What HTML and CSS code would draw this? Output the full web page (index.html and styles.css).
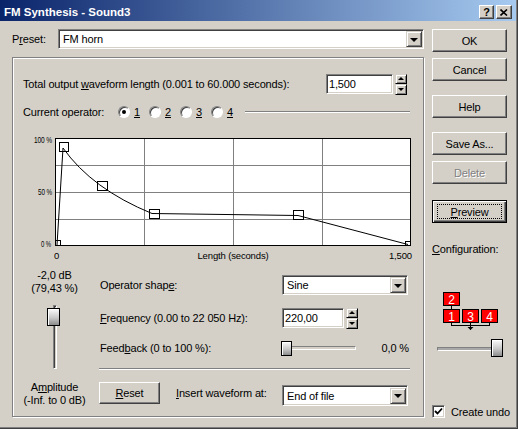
FILE: index.html
```html
<!DOCTYPE html>
<html>
<head>
<meta charset="utf-8">
<title>FM Synthesis - Sound3</title>
<link rel="stylesheet" href="styles.css">
</head>
<body>
<div class="window">
  <div class="titlebar">
    <span class="title">FM Synthesis - Sound3</span>
    <div class="tbtns">
      <span class="tbtn help-btn">?</span>
      <span class="tbtn close-btn"><svg width="8" height="7" viewBox="0 0 8 7"><path d="M0.5 0.5 L7 6.5 M7 0.5 L0.5 6.5" stroke="#000" stroke-width="1.6" fill="none"/></svg></span>
    </div>
  </div>
  <div class="client">
    <div class="left">
      <div class="preset-row">
        <span class="preset-lbl">P<u>r</u>eset:</span>
        <div class="field combo preset-combo"><span class="combo-text">FM horn</span><span class="drop"></span></div>
      </div>
      <div class="group">
        <div class="row-total">
          <span class="grow">Total output <u>w</u>aveform length (0.001 to 60.000 seconds):</span>
          <div class="field num total-num">1,500</div>
          <div class="spin"><span class="up"></span><span class="down"></span></div>
        </div>
        <div class="row-op">
          <span class="op-lbl">Current operator:</span>
          <span class="radio-item"><span class="radio on"></span><u>1</u></span>
          <span class="radio-item"><span class="radio"></span><u>2</u></span>
          <span class="radio-item"><span class="radio"></span><u>3</u></span>
          <span class="radio-item"><span class="radio"></span><u>4</u></span>
          <span class="etch op-line"></span>
        </div>
        <svg class="graph" width="410" height="134" viewBox="13 130 410 134">
          <rect x="55.5" y="138.5" width="355" height="107" fill="#fff" stroke="none"/>
          <g stroke="#808080" stroke-width="1">
            <line x1="144.5" y1="139" x2="144.5" y2="246"/>
            <line x1="233.5" y1="139" x2="233.5" y2="246"/>
            <line x1="322.5" y1="139" x2="322.5" y2="246"/>
            <line x1="56" y1="165.5" x2="411" y2="165.5"/>
            <line x1="56" y1="192.5" x2="411" y2="192.5"/>
            <line x1="56" y1="219.5" x2="411" y2="219.5"/>
          </g>
          <rect x="55.5" y="138.5" width="355" height="107" fill="none" stroke="#000"/>
          <path d="M57 245 L63 148 Q92 189 152 213.5 L226 214.5 L298 215.5 L408 244.5" fill="none" stroke="#000" stroke-width="1"/>
          <g fill="none" stroke="#000" stroke-width="1">
            <rect x="55.5" y="240.5" width="5" height="5"/>
            <rect x="59.5" y="142.5" width="9" height="9"/>
            <rect x="97.5" y="181.5" width="10" height="9"/>
            <rect x="149.5" y="209.5" width="10" height="9"/>
            <rect x="293.5" y="210.5" width="10" height="9"/>
            <rect x="405.5" y="241.5" width="5" height="4"/>
          </g>
          <g class="gtext">
            <text x="52" y="143" text-anchor="end" textLength="18" lengthAdjust="spacingAndGlyphs" class="ylab">100 %</text>
            <text x="52" y="195" text-anchor="end" textLength="14" lengthAdjust="spacingAndGlyphs" class="ylab">50 %</text>
            <text x="51" y="247" text-anchor="end" textLength="10" lengthAdjust="spacingAndGlyphs" class="ylab">0 %</text>
            <text x="54" y="259">0</text>
            <text x="233" y="259" text-anchor="middle">Length (seconds)</text>
            <text x="412" y="259" text-anchor="end">1,500</text>
          </g>
        </svg>
        <div class="bottom">
          <div class="amp-col">
            <div class="amp-val">-2,0 dB<br>(79,43 %)</div>
            <div class="vslider"><span class="vtrack"></span><span class="thumb vthumb"></span></div>
            <div class="amp-lbl">A<u>m</u>plitude<br>(-Inf. to 0 dB)</div>
          </div>
          <div class="ctl-col">
            <div class="crow shape-row">
              <span class="clbl">Operator shap<u>e</u>:</span>
              <div class="field combo small-combo"><span class="combo-text">Sine</span><span class="drop"></span></div>
            </div>
            <div class="crow freq-row">
              <span class="clbl"><u>F</u>requency (0.00 to 22 050 Hz):</span>
              <div class="field num freq-num">220,00</div>
              <div class="spin"><span class="up"></span><span class="down"></span></div>
            </div>
            <div class="crow fb-row">
              <span class="clbl">Feed<u>b</u>ack (0 to 100 %):</span>
              <div class="hslider"><span class="htrack"></span><span class="thumb hthumb"></span></div>
              <span class="fb-val">0,0 %</span>
            </div>
            <div class="etch sep"></div>
            <div class="crow reset-row">
              <span class="btn reset-btn"><u>R</u>eset</span>
              <span class="ins-lbl"><u>I</u>nsert waveform at:</span>
              <div class="field combo small-combo ins-combo"><span class="combo-text">End of file</span><span class="drop"></span></div>
            </div>
          </div>
        </div>
      </div>
    </div>
    <div class="right">
      <span class="btn">OK</span>
      <span class="btn b-cancel">Cancel</span>
      <span class="btn b-help">Help</span>
      <span class="btn b-save">Save As...</span>
      <span class="btn b-delete disabled">Delete</span>
      <span class="btn b-preview default"><span class="focus"></span><u>P</u>review</span>
      <div class="config-lbl"><u>C</u>onfiguration:</div>
      <svg class="config" width="76" height="50" viewBox="432 288 76 50">
        <g stroke="#000" stroke-width="1" fill="none">
          <line x1="451.5" y1="305" x2="451.5" y2="309"/>
          <line x1="451.5" y1="322" x2="451.5" y2="326"/>
          <line x1="470.5" y1="322" x2="470.5" y2="330"/>
          <line x1="489.5" y1="322" x2="489.5" y2="326"/>
          <line x1="451" y1="325.5" x2="490" y2="325.5"/>
        </g>
        <path d="M467.5 327 L473.5 327 L470.5 330 Z" fill="#000"/>
        <g fill="#ff0000" stroke="#000" stroke-width="1">
          <rect x="443.5" y="292.5" width="16" height="13"/>
          <rect x="443.5" y="309.5" width="16" height="13"/>
          <rect x="462.5" y="309.5" width="16" height="13"/>
          <rect x="481.5" y="309.5" width="16" height="13"/>
        </g>
        <g class="ctext" fill="#fff" text-anchor="middle">
          <text x="451.5" y="304">2</text>
          <text x="451.5" y="321">1</text>
          <text x="470.5" y="321">3</text>
          <text x="489.5" y="321">4</text>
        </g>
      </svg>
      <div class="cslider"><span class="ctrack"></span><span class="thumb cthumb"></span></div>
      <div class="undo-row"><span class="check"><svg width="9" height="9" viewBox="0 0 9 9"><path d="M1 4 L3.5 6.5 L8 1.5" stroke="#000" stroke-width="1.8" fill="none"/></svg></span><span class="undo-text">Create undo</span></div>
    </div>
  </div>
</div>
</body>
</html>
```
FILE: styles.css
```css
body {
  margin: 0;
  background: #d4d0c8;
  font-family: "Liberation Sans", Arial, sans-serif;
  font-size: 11px;
  letter-spacing: -0.15px;
  color: #000;
}
.window {
  width: 518px;
  height: 429px;
  box-sizing: border-box;
  background: #d4d0c8;
  border-right: 1px solid #404040;
  border-bottom: 1px solid #404040;
  box-shadow: inset -1px -1px 0 #808080;
  overflow: hidden;
}
.titlebar {
  height: 21px;
  margin-right: 1px;
  display: flex;
  align-items: flex-start;
  background: linear-gradient(to right, #0a246a, #a6caf0);
  color: #fff;
}
.title {
  font-weight: bold;
  font-size: 11.5px;
  letter-spacing: 0;
  padding-left: 4px;
  line-height: 14px;
  margin-top: 5px;
}
.tbtns {
  margin-left: auto;
  margin-right: 4px;
  margin-top: 5px;
  display: flex;
  gap: 2px;
}
.tbtn {
  box-sizing: border-box;
  width: 16px;
  height: 14px;
  background: #d4d0c8;
  border: 1px solid;
  border-color: #fff #404040 #404040 #fff;
  box-shadow: inset -1px -1px 0 #808080;
  color: #000;
  display: flex;
  align-items: center;
  justify-content: center;
  font-weight: bold;
  font-size: 11px;
  line-height: 11px;
}
.help-btn { width: 15px; }
.client {
  display: flex;
  padding: 8px 0 0 12px;
}
.left { width: 412px; }
.preset-row {
  display: flex;
  align-items: center;
  height: 20px;
}
.preset-lbl { width: 46px; }
.field {
  box-sizing: border-box;
  height: 20px;
  background: #fff;
  border: 1px solid;
  border-color: #808080 #fff #fff #808080;
  box-shadow: inset 1px 1px 0 #404040, inset -1px -1px 0 #d4d0c8;
  display: flex;
  align-items: center;
}
.combo { padding-left: 4px; }
.preset-combo { width: 366px; }
.drop {
  box-sizing: border-box;
  margin-left: auto;
  margin-right: 1px;
  width: 16px;
  height: 16px;
  background: #d4d0c8;
  border: 1px solid;
  border-color: #d4d0c8 #404040 #404040 #d4d0c8;
  box-shadow: inset 1px 1px 0 #fff, inset -1px -1px 0 #808080;
  display: flex;
  align-items: center;
  justify-content: center;
}
.drop::after {
  content: "";
  border-left: 4px solid transparent;
  border-right: 4px solid transparent;
  border-top: 4px solid #000;
  margin-top: 1px;
}
.group {
  box-sizing: border-box;
  margin-top: 8px;
  width: 412px;
  height: 360px;
  border: 1px solid #808080;
  box-shadow: 1px 1px 0 #fff, inset 1px 1px 0 #fff;
  padding-top: 16px;
  display: flex;
  flex-direction: column;
}
.row-total {
  display: flex;
  align-items: center;
  height: 20px;
  padding-left: 10px;
  padding-right: 16px;
}
.grow { flex: 1; }
.num { padding-left: 2px; }
.total-num { width: 67px; }
.spin {
  margin-left: 2px;
  width: 12px;
  height: 21px;
  display: flex;
  flex-direction: column;
}
.spin span {
  flex: 1;
  box-sizing: border-box;
  background: #d4d0c8;
  border: 1px solid;
  border-color: #d4d0c8 #000 #000 #d4d0c8;
  box-shadow: inset 1px 1px 0 #fff, inset -1px -1px 0 #808080;
  display: flex;
  align-items: center;
  justify-content: center;
}
.spin .up::after {
  content: "";
  border-left: 3px solid transparent;
  border-right: 3px solid transparent;
  border-bottom: 3px solid #000;
}
.spin .down::after {
  content: "";
  border-left: 3px solid transparent;
  border-right: 3px solid transparent;
  border-top: 3px solid #000;
}
.row-op {
  display: flex;
  align-items: center;
  height: 18px;
  margin-top: 9px;
  padding-left: 10px;
}
.op-lbl { width: 95px; }
.radio-item {
  width: 31px;
  display: flex;
  align-items: center;
  gap: 4px;
}
.radio {
  box-sizing: border-box;
  width: 12px;
  height: 12px;
  border-radius: 50%;
  background: #fff;
  border: 1px solid;
  border-color: #808080 #fff #fff #808080;
  box-shadow: inset 1px 1px 0 #404040;
  display: flex;
  align-items: center;
  justify-content: center;
}
.radio.on::after {
  content: "";
  width: 4px;
  height: 4px;
  border-radius: 50%;
  background: #000;
}
.etch {
  box-sizing: border-box;
  height: 2px;
  border-top: 1px solid #808080;
  border-bottom: 1px solid #fff;
}
.op-line {
  margin-left: 3px;
  width: 165px;
}
.graph {
  display: block;
  margin-top: 9px;
}
.gtext {
  font-family: "Liberation Sans", Arial, sans-serif;
  font-size: 9.5px;
  fill: #000;
}
.ylab { font-size: 9px; }
.bottom { display: flex; }
.amp-col {
  width: 83px;
  padding-top: 5px;
  display: flex;
  flex-direction: column;
  align-items: center;
  text-align: center;
}
.amp-val, .amp-lbl { line-height: 13px; }
.vslider {
  margin-top: 10px;
  width: 13px;
  height: 64px;
  position: relative;
  display: flex;
  justify-content: center;
}
.vtrack {
  box-sizing: border-box;
  width: 4px;
  height: 64px;
  border: 1px solid;
  border-color: #808080 #fff #fff #808080;
  box-shadow: inset 1px 1px 0 #404040;
  background: #d4d0c8;
  margin-left: 1px;
}
.thumb {
  position: absolute;
  box-sizing: border-box;
  border: 1px solid #000;
  background: linear-gradient(to bottom, #fafafa, #c8c8c8 55%, #8c8c8c);
  box-shadow: inset 1px 1px 0 #fff;
}
.vthumb {
  left: -1px;
  top: 3px;
  width: 13px;
  height: 18px;
}
.amp-lbl { margin-top: 12px; }
.ctl-col {
  margin-left: 3px;
  width: 311px;
  padding-top: 10px;
  display: flex;
  flex-direction: column;
}
.crow {
  display: flex;
  align-items: center;
  height: 22px;
}
.clbl { width: 182px; padding-left: 1px; }
.small-combo { width: 126px; }
.freq-row { margin-top: 11px; }
.freq-num { width: 62px; }
.fb-row { margin-top: 8px; }
.hslider {
  position: relative;
  width: 74px;
  height: 16px;
}
.htrack {
  position: absolute;
  left: 0;
  right: 0;
  top: 6px;
  height: 4px;
  box-sizing: border-box;
  border: 1px solid;
  border-color: #808080 #fff #fff #808080;
  background: #d4d0c8;
}
.hthumb {
  left: -1px;
  top: 1px;
  width: 11px;
  height: 15px;
}
.fb-val { margin-left: auto; padding-right: 1px; }
.sep { margin-top: 9px; width: 311px; }
.reset-row {
  margin-top: 12px;
  height: 24px;
  align-items: flex-start;
}
.btn {
  position: relative;
  box-sizing: border-box;
  width: 75px;
  height: 23px;
  display: flex;
  align-items: center;
  justify-content: center;
  background: #d4d0c8;
  border: 1px solid;
  border-color: #fff #404040 #404040 #fff;
  box-shadow: inset -1px -1px 0 #808080;
}
.reset-btn { width: 61px; height: 22px; }
.ins-lbl { width: 106px; margin-left: 16px; line-height: 22px; }
.ins-combo { margin-top: 3px; height: 21px; }
.right {
  margin-left: 8px;
  width: 75px;
  display: flex;
  flex-direction: column;
}
.b-cancel { margin-top: 6px; }
.b-help { margin-top: 14px; }
.b-save { margin-top: 14px; }
.b-delete { margin-top: 6px; }
.b-preview { margin-top: 16px; }
.disabled { color: #808080; text-shadow: 1px 1px 0 #fff; }
.default {
  border: 1px solid #000;
  box-shadow: inset 1px 1px 0 #fff, inset -1px -1px 0 #404040, inset -2px -2px 0 #808080;
}
.focus {
  position: absolute;
  left: 4px;
  right: 4px;
  top: 3px;
  bottom: 3px;
  border: 1px dotted #000;
}
.config-lbl {
  margin-top: 19px;
  line-height: 14px;
}
.config {
  display: block;
  margin-top: 32px;
}
.ctext {
  font-family: "Liberation Sans", Arial, sans-serif;
  font-size: 12px;
}
.cslider {
  position: relative;
  margin-top: 1px;
  height: 18px;
  width: 75px;
}
.ctrack {
  position: absolute;
  left: 5px;
  width: 66px;
  top: 8px;
  height: 4px;
  box-sizing: border-box;
  border: 1px solid;
  border-color: #808080 #d4d0c8 #fff #808080;
  background: #a8a8a8;
}
.cthumb {
  left: 59px;
  top: 0;
  width: 12px;
  height: 18px;
}
.undo-row {
  margin-top: 48px;
  display: flex;
  align-items: center;
  gap: 6px;
  height: 13px;
  white-space: nowrap;
}
.check {
  flex: none;
  box-sizing: border-box;
  width: 13px;
  height: 13px;
  background: #fff;
  border: 1px solid;
  border-color: #808080 #fff #fff #808080;
  box-shadow: inset 1px 1px 0 #404040, inset -1px -1px 0 #d4d0c8;
  display: flex;
  align-items: center;
  justify-content: center;
}
.undo-text { font-size: 11px; }
```
